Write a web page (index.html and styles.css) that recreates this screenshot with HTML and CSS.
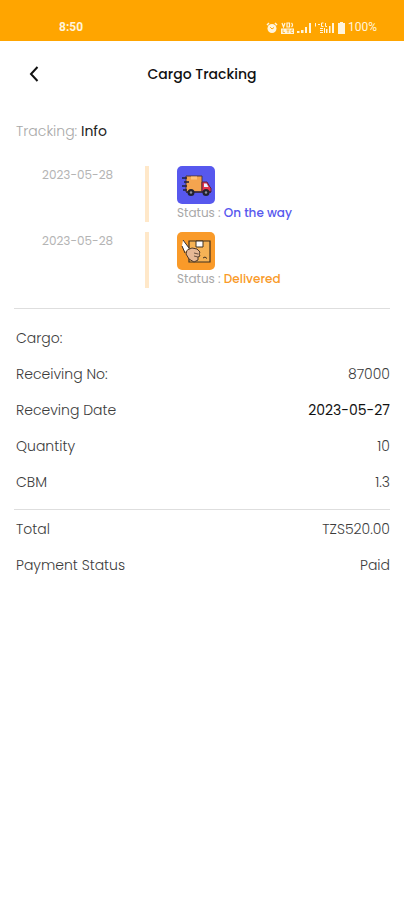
FILE: index.html
```html
<!DOCTYPE html>
<html lang="en">
<head>
  <meta charset="UTF-8" />
  <meta name="viewport" content="width=device-width, initial-scale=1" />
  <title>Cargo Tracking</title>
  <link rel="stylesheet" href="styles.css">
</head>
<body>
  <div class="status-bar">
    <span class="clock">8:50</span>
    <div class="status-icons">
      <svg width="12" height="12" viewBox="0 0 12 12" aria-hidden="true">
        <circle cx="6" cy="6.5" r="4.5" fill="#fff4dc" />
        <path d="M1 3l2-2M11 3L9 1" stroke="#fff4dc" stroke-width="1.5" />
        <path d="M4.2 5.2L6 7l2-1.5" stroke="#ffa500" fill="none" />
      </svg>
      <svg width="13" height="12" viewBox="0 0 13 12" aria-hidden="true">
        <path d="M1 1l1.5 4L4 1M6 1h2.5v4H6zM10.5 1q2 2 0 4" stroke="#fff4dc" stroke-width="1.2" fill="none" />
        <path d="M0 6.5h13V12H0z" fill="#fff4dc" />
        <path d="M2 7.5v3h2M5.5 8h3M7 8v3M12 8h-2v2.5h2" stroke="#ffa500" stroke-width=".7" fill="none" />
      </svg>
      <svg width="15" height="12" viewBox="0 0 15 12" aria-hidden="true">
        <path d="M0 9h2.5v2H0zM4 8h2.5v3H4zM8 5h2v6H8zM12 1h2v10h-2z" fill="#fff4dc" />
      </svg>
      <svg width="20" height="12" viewBox="0 0 20 12" aria-hidden="true">
        <path d="M.5 1v3.5M3 2.5h2M8.5 1h-2v3.5h2M10.5 1v3.5H12M5 6.5h3M5 8.5h3M5 10.5h3M9.5 6v5" stroke="#fff4dc" fill="none" />
        <path d="M11 7h1.5v4H11zM14 4h1.5v7H14zM17 1h2v10h-2z" fill="#fff4dc" />
      </svg>
      <svg width="7" height="12" viewBox="0 0 7 12" aria-hidden="true">
        <path d="M2 0h3v1h2v11H0V1h2z" fill="#fff4dc" />
      </svg>
      <span>100%</span>
    </div>
  </div>

  <header class="header">
    <button class="back" type="button" aria-label="Back">
      <svg width="12" height="18" viewBox="0 0 12 18" aria-hidden="true">
        <path d="M9.5 2L3 9l6.5 7" fill="none" stroke="#111" stroke-width="2" />
      </svg>
    </button>
    <h1>Cargo Tracking</h1>
  </header>

  <main class="content">
    <h2 class="section-title"><span>Tracking:</span> Info</h2>

    <ul class="timeline">
      <li class="step">
        <time class="step-date" datetime="2023-05-28">2023-05-28</time>
        <div class="step-body">
          <svg class="step-icon" viewBox="0 0 38 38" aria-hidden="true">
            <rect width="38" height="38" rx="5" fill="#5758ee" />
            <path d="M9 10h16v16H9z" fill="#f4a44f" stroke="#4a3440" />
            <path d="M14 10.5h6v3h-6z" fill="#ffc178" />
            <path d="M25 16h5l3 5 1 1v4h-9z" fill="#e3324b" stroke="#5b2440" />
            <path d="M27 17.5h2.5l2 3.5H27z" fill="#e8f1ff" />
            <path d="M5 12h5M7 16h5M5 20h5M6 24h4" stroke="#22203a" stroke-width="1.5" />
            <path d="M9 26h25" stroke="#39283e" stroke-width="1.5" />
            <circle cx="14" cy="26.5" r="3.5" fill="#22232f" />
            <circle cx="14" cy="26.5" r="1.2" fill="#8f8f9e" />
            <circle cx="29" cy="26.5" r="3.5" fill="#22232f" />
            <circle cx="29" cy="26.5" r="1.2" fill="#8f8f9e" />
          </svg>
          <p class="step-status">Status : <span class="on-the-way">On the way</span></p>
        </div>
      </li>
      <li class="step">
        <time class="step-date" datetime="2023-05-28">2023-05-28</time>
        <div class="step-body">
          <svg class="step-icon" viewBox="0 0 38 38" aria-hidden="true">
            <rect width="38" height="38" rx="5" fill="#f99a29" />
            <path d="M12 9h21v21H12z" fill="#f6b355" stroke="#3d3021" stroke-width="1.2" />
            <path d="M19 9h7v6h-7z" fill="#fff" stroke="#3d3021" />
            <path d="M26 26l2-1 2 1.5" stroke="#3d3021" fill="none" />
            <path d="M10 18l5-2 5 1 3 3-1 2 1 2-2 1v3l-4 2-5-3-3-5z" fill="#e6b896" stroke="#4b382c" />
            <path d="M17 21l4 1M17 24l4 1" stroke="#4b382c" stroke-width=".8" />
            <path d="M6 8l6 8-4 4-3-6z" fill="#fff" />
            <path d="M6 8l6 8M5 14l3 7" stroke="#2f2b30" fill="none" />
          </svg>
          <p class="step-status">Status : <span class="delivered">Delivered</span></p>
        </div>
      </li>
    </ul>

    <h2 class="details-title">Cargo:</h2>
    <dl class="details">
      <div class="row"><dt>Receiving No:</dt><dd>87000</dd></div>
      <div class="row"><dt>Receving Date</dt><dd class="strong">2023-05-27</dd></div>
      <div class="row"><dt>Quantity</dt><dd>10</dd></div>
      <div class="row"><dt>CBM</dt><dd>1.3</dd></div>
    </dl>
    <dl class="details totals">
      <div class="row"><dt>Total</dt><dd>TZS520.00</dd></div>
      <div class="row"><dt>Payment Status</dt><dd>Paid</dd></div>
    </dl>
  </main>
</body>
</html>
```
FILE: styles.css
```css
* {
  box-sizing: border-box;
  margin: 0;
  padding: 0;
}

body {
  font-family: Poppins, Inter, sans-serif;
  font-size: 14px;
  line-height: 20px;
  color: #3c3c3c;
  background: #fff;
}

.status-bar {
  display: flex;
  justify-content: space-between;
  align-items: flex-end;
  padding: 20px 27px 6px 59px;
  font-family: Roboto, sans-serif;
  font-size: 12px;
  line-height: 15px;
  color: #fff4dc;
  background: #ffa500;
}

.clock {
  font-weight: 700;
}

.status-icons {
  display: flex;
  align-items: center;
  gap: 3px;
}

.header {
  display: grid;
  grid-template-columns: 40px 1fr 40px;
  align-items: center;
  height: 65px;
  padding: 0 14px;
}

.header h1 {
  font-size: 14px;
  font-weight: 500;
  text-align: center;
  color: #111;
}

.back {
  display: flex;
  justify-content: center;
  padding: 8px 0;
  border: none;
  background: none;
  cursor: pointer;
}

.content {
  padding: 15px 14px;
}

.section-title {
  padding-left: 2px;
  font-size: 14px;
  font-weight: 400;
  color: #222;
}

.section-title span {
  font-weight: 300;
  color: #a8a8a8;
}

.timeline {
  display: flex;
  flex-direction: column;
  gap: 10px;
  padding: 25px 0 20px;
  list-style: none;
  border-bottom: 1px solid #dedede;
}

.step {
  display: grid;
  grid-template-columns: 131px 1fr;
}

.step-date {
  padding-left: 28px;
  font-size: 12px;
  line-height: 18px;
  color: #b4b4b4;
}

.step-body {
  padding-left: 28px;
  border-left: 4px solid #ffe8c9;
}

.step-icon {
  display: block;
  width: 38px;
  height: 38px;
}

.step-status {
  font-size: 12px;
  line-height: 18px;
  color: #a8a8a8;
}

.step-status span {
  font-weight: 500;
}

.on-the-way {
  color: #5758ee;
}

.delivered {
  color: #f99a29;
}

.details-title {
  padding: 8px 2px;
  margin-top: 11px;
  font-size: 14px;
  font-weight: 300;
}

.row {
  display: flex;
  justify-content: space-between;
  padding: 8px 0 8px 2px;
  font-weight: 300;
}

.strong {
  font-weight: 400;
  color: #111;
}

.totals {
  margin-top: 9px;
  padding-top: 1px;
  border-top: 1px solid #dedede;
}
```
